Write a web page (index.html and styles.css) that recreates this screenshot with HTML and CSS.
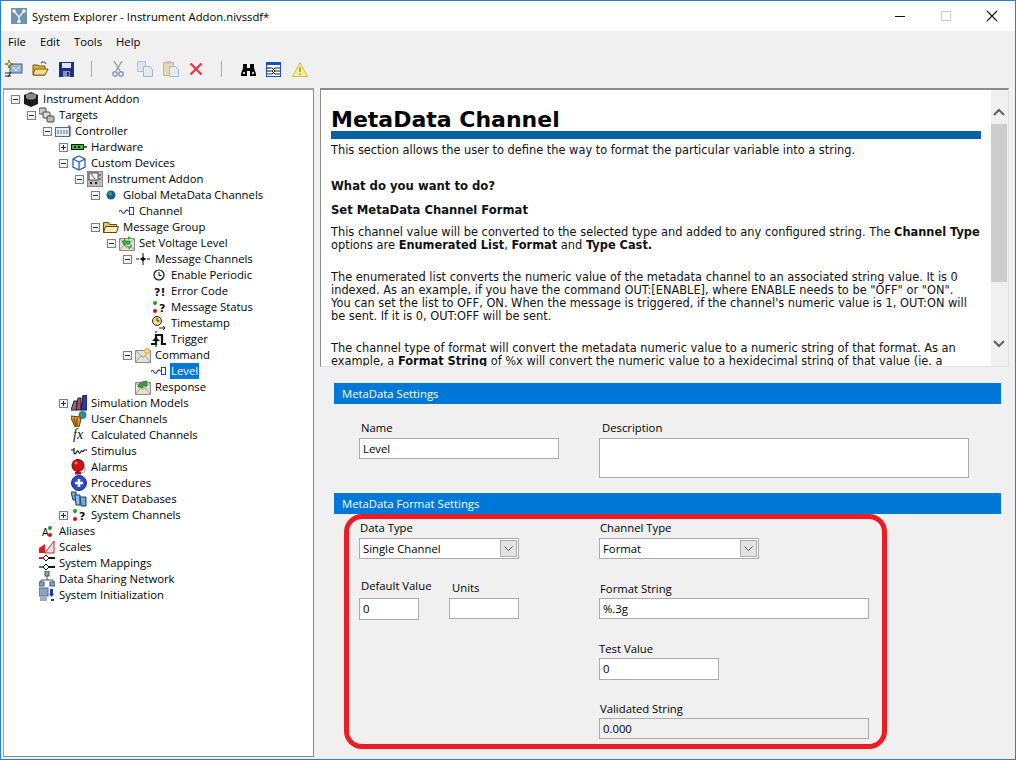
FILE: index.html
```html
<!DOCTYPE html>
<html lang="en">
<head>
    <meta charset="UTF-8">
    <title>System Explorer - Instrument Addon.nivssdf*</title>
    <link rel="stylesheet" href="styles.css">
</head>
<body>
<svg class="defs" width="0" height="0">
    <symbol id="i-channel" viewBox="0 0 16 16"><path d="M0 9c1-2 2-2 3 0s2 2 3 0 2-3 3-1M9 8h2" fill="none" stroke="#1f3fc0" stroke-width="1.2"/><rect x="10.5" y="4.5" width="4" height="7" fill="#fff" stroke="#1f3fc0"/></symbol>
    <symbol id="i-mail" viewBox="0 0 16 16"><path d="M0.5 3.5h15v12h-15z" fill="#e4e0d6" stroke="#8a8a8a"/><path d="M0.5 3.5l7.5 7 7.5-7M0.5 15.5l5.5-7M15.5 15.5l-5.5-7" fill="none" stroke="#a0a0a0"/></symbol>
    <symbol id="i-minus" viewBox="0 0 9 9"><rect x=".5" y=".5" width="8" height="8" fill="#f4f4f4" stroke="#808080"/><path d="M2 4.500h5" stroke="#1c2b50"/></symbol>
    <symbol id="i-plus" viewBox="0 0 9 9"><rect x=".5" y=".5" width="8" height="8" fill="#f4f4f4" stroke="#808080"/><path d="M2 4.500h5M4.500 2v5" stroke="#1c2b50"/></symbol>
</svg>
<div class="window">
    <header class="titlebar">
        <svg class="app-icon" viewBox="0 0 16 16" width="16" height="16"><rect width="16" height="16" fill="#6f93ad"/><path d="M3 3l5 6 5-6M8 9v5" fill="none" stroke="#dfe8ee" stroke-width="1.6"/><circle cx="3" cy="3" r="1.8" fill="#eef3f6"/><circle cx="13" cy="3" r="1.8" fill="#eef3f6"/><circle cx="8" cy="13.5" r="1.8" fill="#eef3f6"/></svg>
        <span class="title">System Explorer - Instrument Addon.nivssdf*</span>
        <div class="win-btns">
            <svg class="win-btn" viewBox="0 0 46 16" width="46" height="16"><path d="M18 8.500h10" stroke="#111"/></svg>
            <svg class="win-btn" viewBox="0 0 46 16" width="46" height="16"><rect x="18.500" y="3.500" width="9" height="9" fill="none" stroke="#ccc"/></svg>
            <svg class="win-btn" viewBox="0 0 46 16" width="46" height="16"><path d="M18 3l10 10M28 3L18 13" stroke="#111" stroke-width="1.100"/></svg>
        </div>
    </header>
    <nav class="menubar">
        <span>File</span><span>Edit</span><span>Tools</span><span>Help</span>
    </nav>
    <div class="toolbar">
        <svg class="tool tool-new" viewBox="0 0 18 18" width="18" height="18"><rect x="5" y="4" width="12" height="9" fill="#9db7cf" stroke="#47617a"/><path d="M4 0l1 3 3 1-3 1-1 3-1-3-3-1 3-1z" fill="#f7e51a" stroke="#222" stroke-width=".5"/><path d="M0 13h5M0 16h6M6 12l-3 5" stroke="#222" fill="none"/><path d="M8 7l3 4 3-4" stroke="#e8f0f6" fill="none"/></svg>
        <svg class="tool tool-open" viewBox="0 0 17 16" width="17" height="16"><path d="M1 14V4h5l1 1h6v9z" fill="#e2b33a" stroke="#7b5a12"/><path d="M1 14l2-6h13l-3 6z" fill="#f7dd85" stroke="#7b5a12"/><path d="M9 2c2-2 4-1 5 1" fill="none" stroke="#2a6f8f" stroke-width="1.200"/></svg>
        <svg class="tool tool-save" viewBox="0 0 15 15" width="15" height="15"><path d="M0 0h15v15H0z" fill="#1e2f86"/><rect x="3" y="1" width="9" height="5" fill="#dfe3f0"/><rect x="4" y="9" width="7" height="6" fill="#8a93b8"/><rect x="8" y="10" width="2" height="4" fill="#1e2f86"/></svg>
        <span class="tool-sep"></span>
        <svg class="tool tool-cut" viewBox="0 0 12 16" width="12" height="16"><path d="M2 0l6 10M10 0L4 10" stroke="#9a9a9a" stroke-width="1.400"/><circle cx="3" cy="13" r="2.200" fill="none" stroke="#8a93c8" stroke-width="1.400"/><circle cx="9" cy="13" r="2.200" fill="none" stroke="#8a93c8" stroke-width="1.400"/></svg>
        <svg class="tool tool-copy" viewBox="0 0 16 16" width="16" height="16"><path d="M.5.5h8v10h-8z" fill="#dde6f4" stroke="#b3c1de"/><path d="M6.500 5.500h6l3 3v7h-9z" fill="#e4ebf7" stroke="#a4b4d6"/></svg>
        <svg class="tool tool-paste" viewBox="0 0 16 16" width="16" height="16"><path d="M.5 1.500h10v13H.5z" fill="#ead9ae" stroke="#c9b98e"/><rect x="3" y="0" width="5" height="3" fill="#cfc8b6"/><path d="M6.500 5.500h6l3 3v7h-9z" fill="#e4ebf7" stroke="#a4b4d6"/></svg>
        <svg class="tool tool-delete" viewBox="0 0 14 14" width="14" height="14"><path d="M1.500 1.500l11 11M12.500 1.500l-11 11" stroke="#e23a4a" stroke-width="2.400"/></svg>
        <span class="tool-sep tool-sep-2"></span>
        <svg class="tool tool-find" viewBox="0 0 15 13" width="15" height="13"><path d="M2 1h4v4h3V1h4v4l2 6v2H9V8H6v5H0v-2l2-6z" fill="#000"/><rect x="2" y="9" width="2" height="2" fill="#ccc"/><rect x="11" y="9" width="2" height="2" fill="#ccc"/></svg>
        <svg class="tool tool-cols" viewBox="0 0 15 15" width="15" height="15"><rect x=".5" y=".5" width="14" height="14" fill="#fff" stroke="#1450c0"/><rect x="1" y="1" width="13" height="2" fill="#1450c0"/><path d="M1 6h5M1 9h5M1 12h5" stroke="#333"/><path d="M1 6h3" stroke="#d02020"/><path d="M1 9h3" stroke="#20a020"/><path d="M6 6l3 3-3 3M9 6l-3 3 3 3M9 6h5M9 9h5M9 12h5" fill="none" stroke="#222"/></svg>
        <svg class="tool tool-warn" viewBox="0 0 16 15" width="16" height="15"><path d="M8 .5l7.500 14H.5z" fill="#f7ee9a" stroke="#c9bd5a"/><path d="M8 5v5M8 11.500v1.500" stroke="#a89a30" stroke-width="1.600"/></svg>
    </div>
    <div class="panes">
        <aside class="tree">
            <div class="node l0"><svg class="exp"><use href="#i-minus"/></svg><svg class="ico" viewBox="0 0 16 16"><path d="M1 4l7-3 7 3v9l-7 3-7-3z" fill="#1c1c1c"/><path d="M3 4c0-2 10-2 10 0v3c-2 2-8 2-10 0z" fill="#8a8a8a"/></svg><span>Instrument Addon</span></div>
            <div class="node l1"><svg class="exp"><use href="#i-minus"/></svg><svg class="ico" viewBox="0 0 16 16"><rect x="0" y="1" width="7" height="6" rx="1" fill="#ccc" stroke="#444"/><rect x="4" y="5" width="7" height="6" rx="1" fill="#ddd" stroke="#444"/><rect x="8" y="9" width="7" height="6" rx="1" fill="#bbb" stroke="#444"/></svg><span>Targets</span></div>
            <div class="node l2"><svg class="exp"><use href="#i-minus"/></svg><svg class="ico" viewBox="0 0 16 16"><rect x=".5" y="4.500" width="14" height="9" fill="#e8edf4" stroke="#5a6a88"/><path d="M3 7v4M6 7v4M9 7v4M12 7v4" stroke="#5a6a88"/><path d="M13 3h2v10" fill="none" stroke="#1f3fc0"/></svg><span>Controller</span></div>
            <div class="node l3"><svg class="exp"><use href="#i-plus"/></svg><svg class="ico" viewBox="0 0 16 16"><rect x="0" y="5" width="13" height="6" fill="#111"/><rect x="1" y="6" width="11" height="4" fill="#2ec82e"/><path d="M3 7h2v2H3zM7 7h2v2H7z" fill="#111"/><rect x="13" y="7" width="3" height="2" fill="#555"/></svg><span>Hardware</span></div>
            <div class="node l3"><svg class="exp"><use href="#i-minus"/></svg><svg class="ico" viewBox="0 0 16 16"><path d="M8 1l6 3v8l-6 3-6-3V4z" fill="#fff" stroke="#2a5fb0" stroke-width="1.300"/><path d="M2 4l6 3 6-3M8 7v8" fill="none" stroke="#2a5fb0" stroke-width="1.300"/></svg><span>Custom Devices</span></div>
            <div class="node l4"><svg class="exp"><use href="#i-minus"/></svg><svg class="ico" viewBox="0 0 16 16"><rect x="0" y="0" width="16" height="16" fill="#bdbdbd" stroke="#555"/><rect x="2" y="2" width="9" height="7" fill="#fff" stroke="#444"/><path d="M4 3l4 5" stroke="#c02020"/><circle cx="13" cy="4" r="1" fill="#666"/><circle cx="13" cy="8" r="1" fill="#666"/><circle cx="4" cy="12" r="1.200" fill="#222"/><circle cx="9" cy="12" r="1.200" fill="#222"/></svg><span>Instrument Addon</span></div>
            <div class="node l5"><svg class="exp"><use href="#i-minus"/></svg><svg class="ico" viewBox="0 0 16 16"><circle cx="8" cy="8" r="4.500" fill="#17608f"/><path d="M5 6c2-2 4-1 4 1s-2 2-3 1z" fill="#3aa845"/></svg><span>Global MetaData Channels</span></div>
            <div class="node l6 leaf"><svg class="ico"><use href="#i-channel"/></svg><span>Channel</span></div>
            <div class="node l5"><svg class="exp"><use href="#i-minus"/></svg><svg class="ico" viewBox="0 0 16 16"><path d="M.5 13.500V3.500h5l1 2h7v8z" fill="#e8c868" stroke="#5a4a18"/><path d="M.5 13.500l2-6h13l-2 6z" fill="#fbeeb4" stroke="#5a4a18"/></svg><span>Message Group</span></div>
            <div class="node l6"><svg class="exp"><use href="#i-minus"/></svg><svg class="ico" viewBox="0 0 16 16"><use href="#i-mail"/><path d="M3 7l3-3v2h5v3H6v2zM13 11l-3 3v-2H6" fill="#3db03d" stroke="#1e7a1e" stroke-width=".6"/><path d="M9 1l3 2-3 2zM13 9v3h-3" fill="#3db03d"/></svg><span>Set Voltage Level</span></div>
            <div class="node l7"><svg class="exp"><use href="#i-minus"/></svg><svg class="ico" viewBox="0 0 16 16"><path d="M1 8h3M12 8h3M8 2v3M8 11v3" stroke="#111"/><path d="M8 4.500l1.200 2.300L11.500 8 9.200 9.200 8 11.500 6.800 9.200 4.500 8l2.300-1.200z" fill="#111"/></svg><span>Message Channels</span></div>
            <div class="node l8 leaf"><svg class="ico" viewBox="0 0 16 16"><circle cx="8" cy="8" r="5" fill="#fff" stroke="#111" stroke-width="1.200"/><path d="M8 5v3.500h2.500" fill="none" stroke="#111"/></svg><span>Enable Periodic</span></div>
            <div class="node l8 leaf"><svg class="ico" viewBox="0 0 16 16"><text x="3" y="13" class="icon-q">?!</text></svg><span>Error Code</span></div>
            <div class="node l8 leaf"><svg class="ico" viewBox="0 0 16 16"><circle cx="4" cy="4" r="2" fill="#1aa01a"/><circle cx="4" cy="12" r="2" fill="#d01010"/><text x="8" y="12.500" class="icon-q">?</text></svg><span>Message Status</span></div>
            <div class="node l8 leaf"><svg class="ico" viewBox="0 0 16 16"><circle cx="6" cy="6" r="4.500" fill="#f5dc80" stroke="#222"/><path d="M6 3v3h2.500" fill="none" stroke="#222"/><path d="M8 13h6M12 11l2 2-2 2" fill="none" stroke="#222"/></svg><span>Timestamp</span></div>
            <div class="node l8 leaf"><svg class="ico" viewBox="0 0 16 16"><path d="M0 13h5V4h6v9h4" fill="none" stroke="#111" stroke-width="2.200"/><path d="M1 10l4-4 4 4z" fill="#111"/><path d="M5 0v2M5 14v2" stroke="#18a018" stroke-width="1.600"/></svg><span>Trigger</span></div>
            <div class="node l7"><svg class="exp"><use href="#i-minus"/></svg><svg class="ico" viewBox="0 0 16 16"><use href="#i-mail"/><circle cx="12" cy="4" r="3" fill="#f5b93a"/><circle cx="12" cy="4" r="1.200" fill="#fff3c0"/></svg><span>Command</span></div>
            <div class="node l8 leaf"><svg class="ico"><use href="#i-channel"/></svg><span class="selected">Level</span></div>
            <div class="node l7 leaf"><svg class="ico" viewBox="0 0 16 16"><use href="#i-mail"/><path d="M3 8c0-4 4-6 9-6v5H8v2z" fill="#3a9a3a" stroke="#1e6a1e" stroke-width=".5"/></svg><span>Response</span></div>
            <div class="node l3"><svg class="exp"><use href="#i-plus"/></svg><svg class="ico" viewBox="0 0 16 16"><path d="M0 15l3-9h3v9z" fill="#777" stroke="#222"/><path d="M5 15l2-12h3v12z" fill="#b04a4a" stroke="#222"/><path d="M10 15l2-15h4v15z" fill="#1f3fc0" stroke="#111"/><path d="M0 15h2" stroke="#e020c0" stroke-width="2"/></svg><span>Simulation Models</span></div>
            <div class="node l3 leaf"><svg class="ico" viewBox="0 0 16 16"><circle cx="11.500" cy="4" r="4" fill="#2f80b0"/><path d="M9 3l3-1 1 3-3 1z" fill="#3aa040"/><path d="M0 5l9 1 1 2-2 8-4 0-4-9z" fill="#e89a2a" stroke="#5a3a10"/><path d="M3 7l2 8M6 7v8" stroke="#5a3a10"/></svg><span>User Channels</span></div>
            <div class="node l3 leaf"><svg class="ico" viewBox="0 0 16 16"><text x="2" y="12" class="icon-fx">fx</text></svg><span>Calculated Channels</span></div>
            <div class="node l3 leaf"><svg class="ico" viewBox="0 0 16 16"><path d="M0 7h3M13 7h3M3 5v5c1 1 1 1 2 0s1-3 2-2 1 3 2 2 1-3 2-2 1 1 2-1" fill="none" stroke="#111" stroke-width="1.100"/></svg><span>Stimulus</span></div>
            <div class="node l3 leaf"><svg class="ico" viewBox="0 0 16 16"><circle cx="7" cy="6.500" r="6" fill="#d01414" stroke="#700"/><circle cx="5" cy="4" r="1.500" fill="#f08080"/><rect x="4" y="13" width="6" height="2.500" fill="#b01010"/><path d="M13 8c2 2 1 5-2 6" fill="none" stroke="#888"/></svg><span>Alarms</span></div>
            <div class="node l3 leaf"><svg class="ico" viewBox="0 0 16 16"><circle cx="8" cy="8" r="7.500" fill="#2f48c8" stroke="#1a2880"/><path d="M8 4v8M4 8h8" stroke="#fff" stroke-width="2.600"/></svg><span>Procedures</span></div>
            <div class="node l3 leaf"><svg class="ico" viewBox="0 0 16 16"><path d="M0 1h5v8H2z" fill="#6fa8d8" stroke="#1a3a60"/><path d="M4 4h5v10H5z" fill="#8cc0e8" stroke="#1a3a60"/><path d="M9 6h6v9H10z" fill="#6fa8d8" stroke="#1a3a60"/></svg><span>XNET Databases</span></div>
            <div class="node l3"><svg class="exp"><use href="#i-plus"/></svg><svg class="ico" viewBox="0 0 16 16"><circle cx="4" cy="4" r="2" fill="#1aa01a"/><circle cx="4" cy="12" r="2" fill="#d01010"/><text x="8" y="12.500" class="icon-q">?</text></svg><span>System Channels</span></div>
            <div class="node l1 leaf"><svg class="ico" viewBox="0 0 16 16"><text x="3" y="13" class="icon-a">A</text><circle cx="11" cy="5" r="2" fill="#1aa01a"/><circle cx="11" cy="12" r="2" fill="#d01010"/></svg><span>Aliases</span></div>
            <div class="node l1 leaf"><svg class="ico" viewBox="0 0 16 16"><path d="M0 9l6-4v9H0z" fill="#d82020"/><path d="M15 2v12H6z" fill="#e8e8e8" stroke="#d82020"/></svg><span>Scales</span></div>
            <div class="node l1 leaf"><svg class="ico" viewBox="0 0 16 16"><path d="M0 3h6" stroke="#d02020" stroke-width="2"/><path d="M0 12h6" stroke="#20a020" stroke-width="2"/><path d="M10 3h6M10 12h6" stroke="#111" stroke-width="2"/><path d="M7 0l3 3-3 3-3-3zM7 9l3 3-3 3-3-3z" fill="#fff" stroke="#111"/></svg><span>System Mappings</span></div>
            <div class="node l1 leaf"><svg class="ico" viewBox="0 0 16 16"><rect x="6" y="0" width="4" height="5" fill="#7fa8c8" stroke="#456"/><rect x="0" y="11" width="5" height="4" fill="#7fa8c8" stroke="#456"/><rect x="11" y="11" width="5" height="4" fill="#7fa8c8" stroke="#456"/><path d="M8 5v4M2 11V9h12v2" fill="none" stroke="#555"/></svg><span>Data Sharing Network</span></div>
            <div class="node l1 leaf"><svg class="ico" viewBox="0 0 16 16"><rect x="0" y="1" width="9" height="8" fill="#7fa8c8" stroke="#666"/><rect x="1" y="10" width="7" height="4" fill="#aaa"/><path d="M11 2v5h-1l2.500 3L15 7h-1V2z" fill="#1436d0"/><path d="M12 13h3" stroke="#1436d0" stroke-width="2"/></svg><span>System Initialization</span></div>
        </aside>
        <main class="content">
            <div class="help">
                <div class="help-body">
                    <h1>MetaData Channel</h1>
                    <p class="intro">This section allows the user to define the way to format the particular variable into a string.</p>
                    <h2>What do you want to do?</h2>
                    <h3>Set MetaData Channel Format</h3>
                    <p>This channel value will be converted to the selected type and added to any configured string. The <b>Channel Type</b><br>options are <b>Enumerated List</b>, <b>Format</b> and <b>Type Cast.</b></p>
                    <p>The enumerated list converts the numeric value of the metadata channel to an associated string value. It is 0<br>indexed. As an example, if you have the command OUT:[ENABLE], where ENABLE needs to be "OFF" or "ON".<br>You can set the list to OFF, ON. When the message is triggered, if the channel's numeric value is 1, OUT:ON will<br>be sent. If it is 0, OUT:OFF will be sent.</p>
                    <p>The channel type of format will convert the metadata numeric value to a numeric string of that format. As an<br>example, a <b>Format String</b> of %x will convert the numeric value to a hexidecimal string of that value (ie. a</p>
                </div>
                <div class="scrollbar">
                    <svg class="scroll-up" viewBox="0 0 16 16" width="16" height="16"><path d="M3 11l5-5 5 5" fill="none" stroke="#606060" stroke-width="2"/></svg>
                    <div class="scroll-track"><div class="scroll-thumb"></div></div>
                    <svg class="scroll-down" viewBox="0 0 16 16" width="16" height="16"><path d="M3 5l5 5 5-5" fill="none" stroke="#606060" stroke-width="2"/></svg>
                </div>
            </div>
            <section class="settings">
                <div class="section-bar">MetaData Settings</div>
                <div class="row-meta">
                    <div class="field f-name"><label>Name</label><div class="box">Level</div></div>
                    <div class="field f-desc"><label>Description</label><div class="box box-tall"></div></div>
                </div>
                <div class="section-bar">MetaData Format Settings</div>
                <div class="format">
                    <div class="col-left">
                        <div class="field f-type"><label>Data Type</label>
                            <div class="box select"><span>Single Channel</span><span class="select-btn"><svg viewBox="0 0 9 5" width="9" height="5"><path d="M.5.5l4 4 4-4" fill="none" stroke="#555"/></svg></span></div>
                        </div>
                        <div class="pair">
                            <div class="field f-default"><label>Default Value</label><div class="box box-22">0</div></div>
                            <div class="field f-units"><label>Units</label><div class="box"></div></div>
                        </div>
                    </div>
                    <div class="col-right">
                        <div class="field f-channel"><label>Channel Type</label>
                            <div class="box select"><span>Format</span><span class="select-btn"><svg viewBox="0 0 9 5" width="9" height="5"><path d="M.5.5l4 4 4-4" fill="none" stroke="#555"/></svg></span></div>
                        </div>
                        <div class="field f-format"><label>Format String</label><div class="box">%.3g</div></div>
                        <div class="field f-test"><label>Test Value</label><div class="box box-22">0</div></div>
                        <div class="field f-valid"><label>Validated String</label><div class="box box-off">0.000</div></div>
                    </div>
                    <div class="callout"></div>
                </div>
            </section>
        </main>
    </div>
</div>
</body>
</html>
```

FILE: styles.css
```css
* {
    margin: 0;
    padding: 0;
    box-sizing: border-box;
}

html, body {
    height: 100%;
}

body {
    font-family: "Open Sans", "Noto Sans", sans-serif;
    font-size: 11.3px;
    color: #000;
    overflow: hidden;
}

.defs {
    display: block;
    height: 0;
}

.icon-q {
    font: bold 11px "DejaVu Sans", sans-serif;
    fill: #111;
}

.icon-fx {
    font: italic 14px "Liberation Serif", serif;
    fill: #111;
}

.icon-a {
    font: 10px "Liberation Sans", sans-serif;
    fill: #111;
}

.window {
    width: 1016px;
    height: 760px;
    background: #f0f0f0;
    border: 1px solid #2a7fc9;
    display: flex;
    flex-direction: column;
}

.titlebar {
    height: 30px;
    background: #fff;
    display: flex;
    align-items: center;
    padding-left: 10px;
    flex: none;
}

.title {
    margin-left: 5px;
    flex: 1;
}

.win-btns {
    display: flex;
}

.win-btn {
    display: block;
}

.menubar {
    height: 21px;
    display: flex;
    align-items: center;
    padding-left: 7px;
    gap: 14px;
    flex: none;
}

.toolbar {
    height: 34px;
    display: flex;
    align-items: center;
    padding-left: 4px;
    flex: none;
}

.tool {
    flex: none;
    display: block;
}

.tool-open { margin-left: 9px; }
.tool-save { margin-left: 10px; }
.tool-copy { margin-left: 13px; }
.tool-paste { margin-left: 10px; }
.tool-delete { margin-left: 10px; }
.tool-find { margin-left: 19px; }
.tool-cols { margin-left: 10px; }
.tool-warn { margin-left: 11px; }

.tool-sep {
    width: 1px;
    height: 16px;
    background: #a8a8a8;
    margin: 0 20px 0 17px;
}

.tool-sep-2 {
    margin: 0 0 0 18px;
}

.panes {
    flex: 1;
    display: flex;
    min-height: 0;
    padding-left: 2px;
}

.tree {
    width: 311px;
    height: 669px;
    margin-top: 2px;
    background: #fff;
    border-top: 2px solid #a0a0a0;
    border-left: 1px solid #a0a0a0;
    border-right: 1px solid #8a8a8a;
    border-bottom: 1px solid #8a8a8a;
    padding: 1px 0 0 7px;
    flex: none;
}

.node {
    height: 16px;
    display: flex;
    align-items: center;
}

.l1 { padding-left: 16px; }
.l2 { padding-left: 32px; }
.l3 { padding-left: 48px; }
.l4 { padding-left: 64px; }
.l5 { padding-left: 80px; }
.l6 { padding-left: 96px; }
.l7 { padding-left: 112px; }
.l8 { padding-left: 128px; }

.exp {
    width: 9px;
    height: 9px;
    flex: none;
    margin-right: 3px;
}

.leaf {
    margin-left: 12px;
}

.ico {
    width: 16px;
    height: 16px;
    flex: none;
    margin-right: 3px;
}

.node span {
    padding: 0 1px;
    line-height: 16px;
    white-space: nowrap;
}

.node .selected {
    background: #0078d7;
    color: #fff;
}

.content {
    flex: 1;
    min-width: 0;
    padding: 2px 0 0 6px;
}

.help {
    width: 689px;
    height: 279px;
    background: #fff;
    border-top: 2px solid #8c8c8c;
    border-left: 1px solid #8c8c8c;
    border-right: 1px solid #e0e0e0;
    border-bottom: 1px solid #e0e0e0;
    display: flex;
    overflow: hidden;
}

.help-body {
    flex: 1;
    min-width: 0;
    padding: 15px 10px 0 10px;
    font: 11.4px/13px "DejaVu Sans", Verdana, sans-serif;
    color: #111;
    overflow: hidden;
}

.help-body h1 {
    font-size: 22px;
    line-height: 30px;
    border-bottom: 8px solid #0761a8;
    height: 34px;
    margin-bottom: 5px;
    color: #000;
}

.help-body h2 {
    font-size: 11.65px;
    line-height: 14px;
    margin: 22px 0 0;
}

.help-body h3 {
    font-size: 11.6px;
    line-height: 14px;
    margin: 10px 0 9px;
}

.help-body p {
    margin-bottom: 19px;
    white-space: nowrap;
}

.help-body .intro {
    margin-bottom: 0;
}

.scrollbar {
    width: 17px;
    flex: none;
    background: #f0f0f0;
    display: flex;
    flex-direction: column;
    padding: 0 1px 0 0;
}

.scroll-up {
    flex: none;
    margin: 14px 0 4px;
}

.scroll-down {
    flex: none;
    margin-bottom: 14px;
}

.scroll-track {
    flex: 1;
}

.scroll-thumb {
    height: 158px;
    background: #cdcdcd;
}

.settings {
    padding: 16px 0 0 14px;
}

.section-bar {
    width: 667px;
    height: 21px;
    background: #0078d7;
    color: #fff;
    line-height: 21px;
    padding-left: 8px;
}

.row-meta {
    display: flex;
    height: 89px;
    padding-left: 25px;
}

.field label {
    display: block;
    height: 16px;
    line-height: 16px;
}

.box {
    height: 21px;
    background: #fff;
    border: 1px solid #ababab;
    line-height: 19px;
    padding-left: 3px;
    white-space: nowrap;
}

.box-22 {
    height: 22px;
}

.box-tall {
    height: 40px;
}

.box-off {
    background: #f0f0f0;
}

.f-name {
    width: 200px;
    padding-top: 16px;
}

.f-name label { padding-left: 2px; height: 18px; }

.f-desc {
    width: 370px;
    margin-left: 40px;
    padding-top: 16px;
}

.f-desc label { padding-left: 3px; height: 18px; }

.format {
    position: relative;
    height: 245px;
    display: flex;
    padding-left: 25px;
}

.col-left {
    width: 160px;
}

.col-right {
    width: 270px;
    margin-left: 80px;
}

.select {
    display: flex;
    align-items: center;
    justify-content: space-between;
    padding-right: 1px;
}

.select-btn {
    width: 17px;
    height: 17px;
    background: #e3e3e3;
    border: 1px solid #ababab;
    display: flex;
    align-items: center;
    justify-content: center;
}

.f-type {
    padding-top: 6px;
}

.f-type label { padding-left: 1px; height: 18px; }

.pair {
    display: flex;
    margin-top: 27px;
}

.f-default { width: 60px; }
.f-default label { margin-top: -12px; height: 24px; padding: 4px 0 0 2px; white-space: nowrap; }

.f-units { width: 70px; margin-left: 30px; }
.f-units label { margin-top: -12px; height: 24px; padding: 6px 0 0 3px; }

.f-channel { padding-top: 6px; width: 160px; }
.f-channel label { padding-left: 1px; height: 18px; }

.f-format { margin-top: 22px; }
.f-format label { padding-left: 1px; height: 17px; }

.f-test { margin-top: 22px; width: 120px; }
.f-test label { height: 17px; }

.f-valid { margin-top: 21px; }
.f-valid label { padding-left: 1px; height: 17px; }

/* the red box is drawn over the form */
.callout {
    position: absolute;
    left: 10px;
    top: 0;
    width: 543px;
    height: 235px;
    border: 5px solid #ed1c24;
    border-radius: 18px;
    pointer-events: none;
}
```
